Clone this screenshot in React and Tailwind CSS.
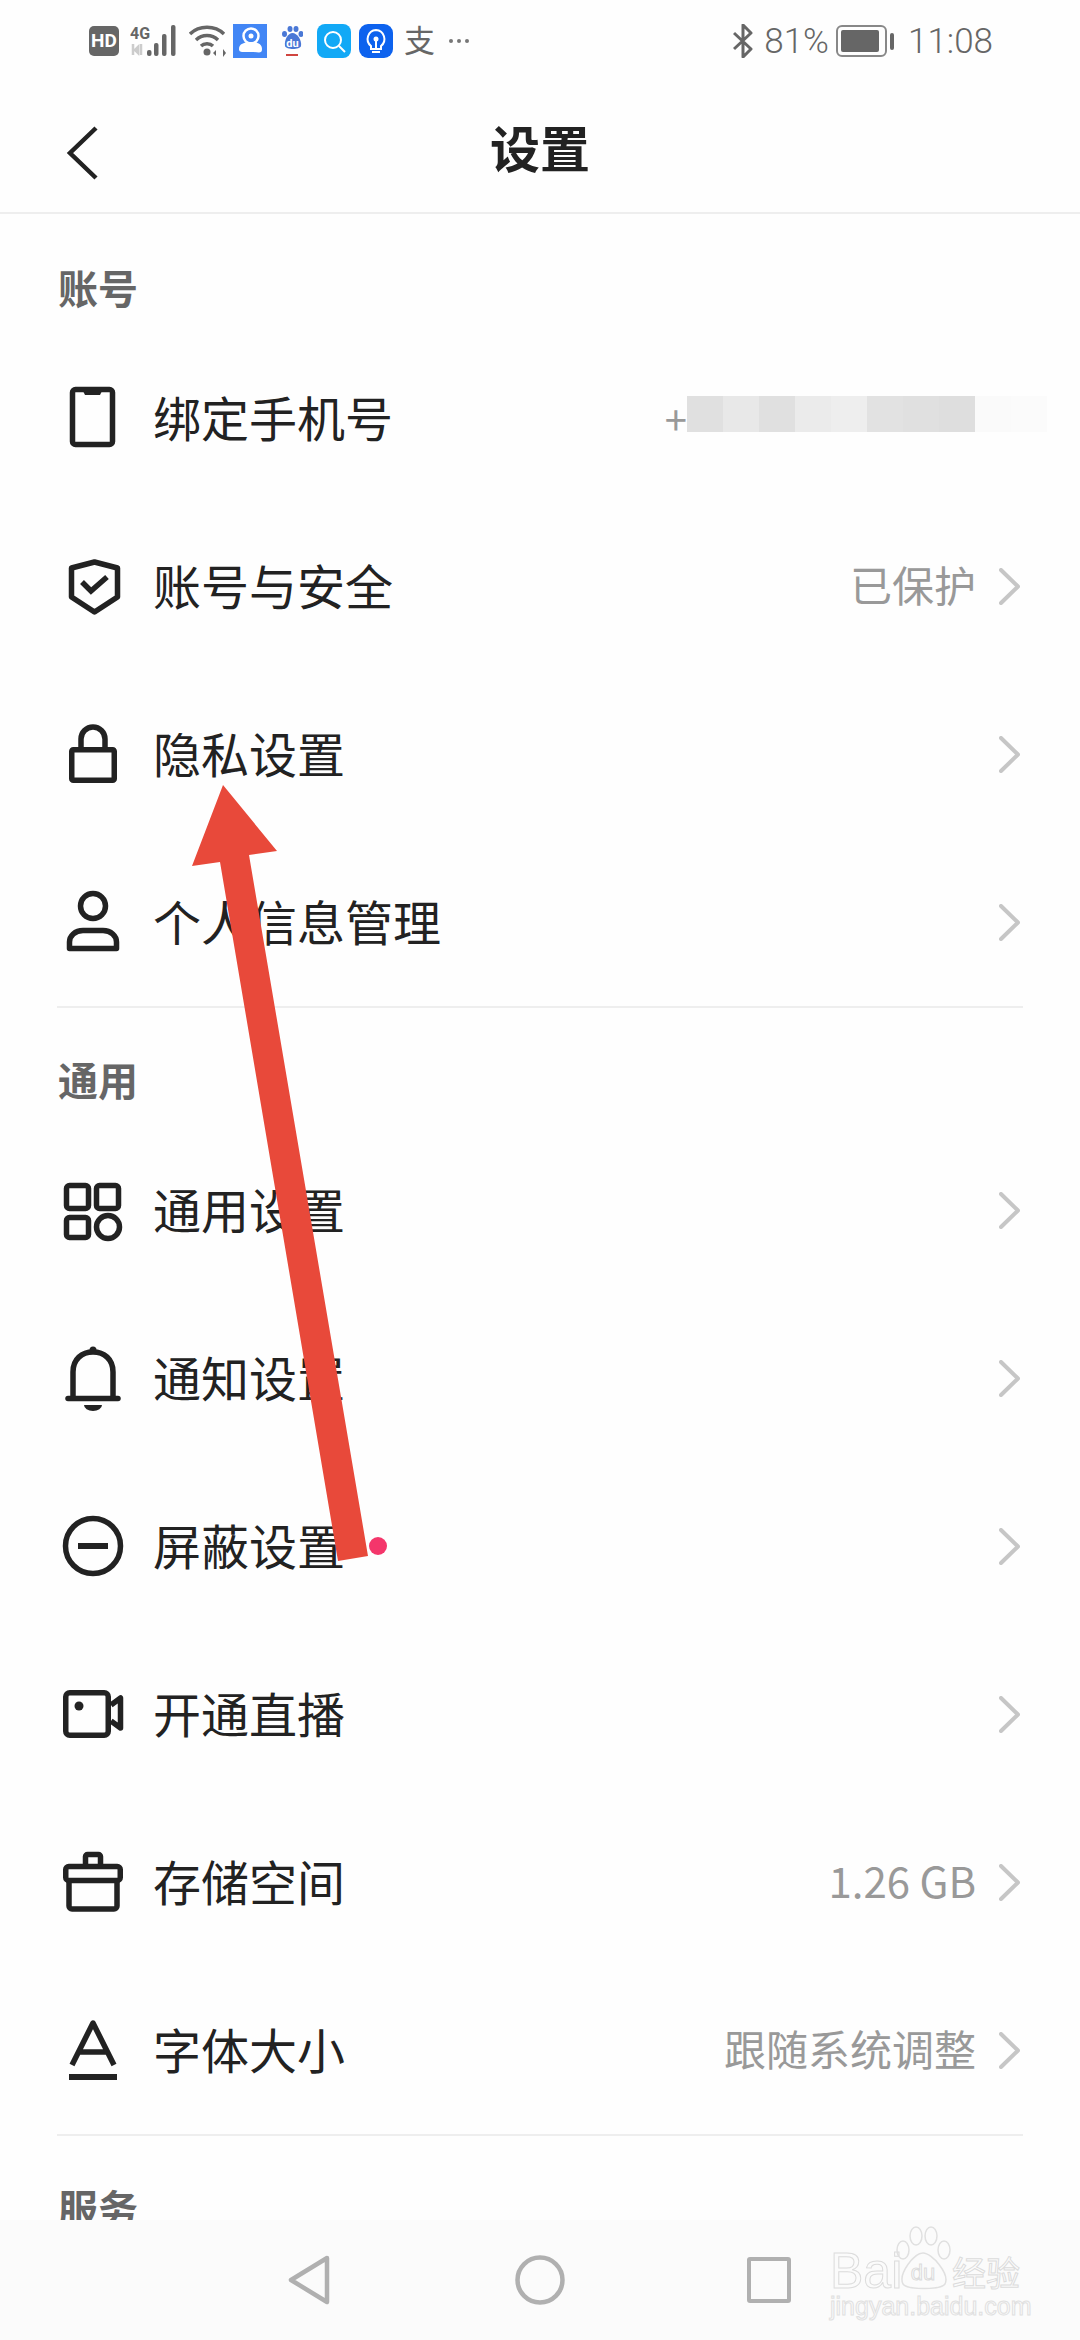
import React from 'react';

const stroke = { fill: 'none', stroke: '#222', strokeWidth: 5.5 };

const Ico = ({ children }) => (
  <svg width="64" height="64" viewBox="0 0 64 64" className="shrink-0 overflow-visible">
    {children}
  </svg>
);

const PhoneIcon = () => (
  <Ico>
    <rect x="11.5" y="3.5" width="40" height="55" rx="3" {...stroke} />
    <path d="M22 5h19l-2 4H24z" fill="#222" />
  </Ico>
);
const ShieldIcon = () => (
  <Ico>
    <path d="M33.5 8L56.5 14V43L33.5 58L10.5 43V14Z" {...stroke} strokeLinejoin="round" />
    <path d="M21 28L30 37L46 23" {...stroke} />
  </Ico>
);
const LockIcon = () => (
  <Ico>
    <rect x="10.75" y="27.75" width="42.5" height="30.5" rx="1.5" {...stroke} />
    <path d="M20 27V17a12 12 0 0 1 24 0V27" {...stroke} />
  </Ico>
);
const PersonIcon = () => (
  <Ico>
    <circle cx="32" cy="16" r="12.5" {...stroke} />
    <path d="M8.500 58.500V52C8.500 46 14 40.500 22 40.500H42C50 40.500 55.500 46 55.500 52V58.500Z" {...stroke} strokeLinejoin="round" />
  </Ico>
);
const GridIcon = () => (
  <Ico>
    <rect x="5.5" y="7.5" width="22" height="23" rx="3" {...stroke} />
    <rect x="35.5" y="7.5" width="22" height="23" rx="3" {...stroke} />
    <rect x="5.5" y="39.5" width="22" height="20" rx="3" {...stroke} />
    <circle cx="47" cy="49" r="11.5" {...stroke} />
  </Ico>
);
const BellIcon = () => (
  <Ico>
    <path d="M12 51V26C12 13 21 6 32 6C43 6 52 13 52 26V51" {...stroke} />
    <path d="M7 52.5H57" {...stroke} strokeLinecap="round" />
    <circle cx="32" cy="4" r="3.5" fill="#222" />
    <path d="M23 59h18a9 6 0 0 1-18 0z" fill="#222" />
  </Ico>
);
const MinusIcon = () => (
  <Ico>
    <circle cx="32" cy="32" r="27.5" {...stroke} />
    <rect x="17" y="29" width="30" height="6" fill="#222" />
  </Ico>
);
const CameraIcon = () => (
  <Ico>
    <rect x="4.75" y="10.75" width="42.5" height="42.5" rx="4" {...stroke} />
    <path d="M50 23L59.5 16V46L50 39" {...stroke} strokeLinejoin="round" />
    <circle cx="18" cy="24" r="4.5" fill="#222" />
  </Ico>
);
const BoxIcon = () => (
  <Ico>
    <path d="M24.5 16V6.5a2 2 0 0 1 2-2h11a2 2 0 0 1 2 2V16" {...stroke} />
    <rect x="4.75" y="16.5" width="54.5" height="14" rx="3" {...stroke} />
    <path d="M8 31V56a3 3 0 0 0 3 3h42a3 3 0 0 0 3-3V31" {...stroke} />
  </Ico>
);
const FontIcon = () => (
  <Ico>
    <path d="M11 47L32 5L53 47M18 34H46" {...stroke} strokeLinejoin="round" />
    <rect x="8" y="56" width="48" height="6" fill="#222" />
  </Ico>
);

const Chevron = () => (
  <svg width="21" height="37" viewBox="0 0 21 37" className="shrink-0">
    <path d="M2 2L19 18.5L2 35" fill="none" stroke="#c6c6c6" strokeWidth="4" strokeLinecap="round" strokeLinejoin="round" />
  </svg>
);

const Row = ({ icon, label, value, dot, children }) => (
  <div className="flex items-center h-[168px] pl-[61px] pr-[60px]">
    {icon}
    <span className="ml-[28px] mb-[5px] text-[48px] leading-none text-[#222]">{label}</span>
    {dot && <span className="ml-[24px] w-[18px] h-[18px] rounded-full bg-[#f4366b]" />}
    <div className="flex-1" />
    {children || (
      <>
        {value && <span className="mr-[23px] mb-[5px] text-[42px] leading-none text-[#999]">{value}</span>}
        <Chevron />
      </>
    )}
  </div>
);

const Heading = ({ children }) => (
  <div className="h-[120px] pt-[48px] pl-[58px] text-[40px] leading-[50px] font-bold text-[#666]">{children}</div>
);

const blurBlocks = ['#e0e0e0', '#e8e8e8', '#e0e0e0', '#ebebeb', '#eeeeee', '#e2e2e2', '#e0e0e0', '#dedede', '#fafafa', '#fbfbfb'];

const StatusLeft = () => (
  <div className="flex items-center">
    <div className="w-[30px] h-[30px] rounded-[5px] bg-[#666] text-white text-[19px] leading-[30px] font-bold text-center font-['Roboto',sans-serif]">HD</div>
    <svg width="50" height="32" viewBox="0 0 50 32" className="ml-[11px]">
      <text x="0" y="14" fontSize="16" fontWeight="700" fill="#666" fontFamily="Roboto">4G</text>
      <path d="M3 19v11M8 22l-3 3 3 3zM11 19v11" stroke="#ccc" strokeWidth="2.5" fill="none" />
      <rect x="17" y="25" width="4.5" height="6" rx="2" fill="#666" />
      <rect x="24" y="18" width="4.5" height="13" rx="2" fill="#666" />
      <rect x="32" y="9" width="4.5" height="22" rx="2" fill="#666" />
      <rect x="41" y="0" width="4.5" height="31" rx="2" fill="#666" />
    </svg>
    <svg width="37" height="32" viewBox="0 0 37 32" className="ml-[9px]">
      <path d="M1 9C10 0 26 0 35 9M7 15C13 9 23 9 29 15M12 21C15 18 21 18 24 21" fill="none" stroke="#666" strokeWidth="3.4" />
      <circle cx="18" cy="27" r="3.5" fill="#666" />
      <path d="M27 25l-3 3 3 3zM31 24v8M34 24l3 4-3 4z" fill="#666" />
    </svg>
    <svg width="34" height="34" viewBox="0 0 34 34" className="ml-[7px]">
      <rect width="34" height="34" fill="#4286f5" />
      <circle cx="18" cy="12" r="7.5" fill="none" stroke="#fff" strokeWidth="2.5" />
      <circle cx="18" cy="12" r="2.5" fill="#fff" />
      <path d="M6 25c0-5 5-7 12-7s11 2 11 7-3 3-11 3-12 1-12-3z" fill="#fff" />
    </svg>
    <svg width="21" height="30" viewBox="0 0 21 30" className="ml-[15px]">
      <ellipse cx="2.5" cy="8" rx="2.5" ry="3" fill="#4a78d6" />
      <ellipse cx="8" cy="3" rx="2.5" ry="3" fill="#4a78d6" />
      <ellipse cx="14" cy="3" rx="2.5" ry="3" fill="#4a78d6" />
      <ellipse cx="19" cy="8" rx="2.5" ry="3" fill="#4a78d6" />
      <path d="M10.500 7C6 7 2 14 3 20c1 4 15 4 16 0 1-6-4-13-8.500-13z" fill="#4a78d6" />
      <text x="10.500" y="21" textAnchor="middle" fontSize="11" fontWeight="700" fill="#fff" fontFamily="Roboto">du</text>
      <rect x="4" y="28" width="12" height="2" fill="#d0453f" />
    </svg>
    <svg width="34" height="34" viewBox="0 0 34 34" className="ml-[14px]">
      <rect width="34" height="34" rx="8" fill="#12a9f6" />
      <circle cx="16" cy="16" r="8" fill="none" stroke="#fff" strokeWidth="2" />
      <path d="M22 22l6 6" stroke="#fff" strokeWidth="2" />
    </svg>
    <svg width="34" height="34" viewBox="0 0 34 34" className="ml-[8px]">
      <rect width="34" height="34" rx="9" fill="#0d62ee" />
      <path d="M17 6a9 9 0 0 0-5 16v3h10v-3a9 9 0 0 0-5-16z" fill="none" stroke="#fff" strokeWidth="2" />
      <circle cx="17" cy="15" r="2.500" fill="#fff" />
      <path d="M17 15v9M13 28h8" stroke="#fff" strokeWidth="2" />
    </svg>
    <span className="ml-[11px] mb-[6px] w-[31px] text-[31px] leading-none text-[#666] text-center">支</span>
    <div className="ml-[14px] flex gap-[4px]">
      <span className="w-[4px] h-[4px] rounded-full bg-[#777]" />
      <span className="w-[4px] h-[4px] rounded-full bg-[#777]" />
      <span className="w-[4px] h-[4px] rounded-full bg-[#777]" />
    </div>
  </div>
);

const StatusRight = () => (
  <div className="flex items-center font-['Roboto',sans-serif] text-[#666] text-[35px] leading-none font-light">
    <svg width="20" height="34" viewBox="0 0 20 34">
      <path d="M1 9L18 25L10 33V1L18 9L1 25" fill="none" stroke="#666" strokeWidth="3" strokeLinejoin="round" />
    </svg>
    <span className="ml-[11px]">81%</span>
    <div className="ml-[7px] w-[51px] h-[32px] rounded-[6px] border-[2px] border-[#888] p-[3px]">
      <div className="w-[38px] h-full rounded-[2px] bg-[#666]" />
    </div>
    <div className="ml-[3px] w-[4px] h-[17px] rounded-[2px] bg-[#666]" />
    <span className="ml-[14px]">11:08</span>
  </div>
);

const Watermark = () => (
  <div className="absolute left-[830px] top-[6px] w-[190px] h-[92px]">
    <span className="absolute left-0 top-[20px] font-['Liberation_Sans',sans-serif] text-[50px] leading-[50px] text-transparent [-webkit-text-stroke:1px_#dcdcdc]">Bai</span>
    <svg width="60" height="66" viewBox="0 0 60 66" className="absolute left-[64px] top-0">
      <g fill="none" stroke="#e0e0e0" strokeWidth="1.500">
        <ellipse cx="9" cy="24" rx="6" ry="9" />
        <ellipse cx="22" cy="10" rx="6" ry="9" />
        <ellipse cx="37" cy="10" rx="6" ry="9" />
        <ellipse cx="50" cy="24" rx="6" ry="9" />
        <path d="M29 27C20 27 4 48 9 58c4 6 38 6 42 0 5-10-13-31-22-31z" />
      </g>
      <text x="29" y="54" textAnchor="middle" fontSize="22" fill="none" stroke="#dcdcdc" strokeWidth="1" fontFamily="Liberation Sans">du</text>
    </svg>
    <span className="absolute left-[122px] top-[26px] text-[34px] leading-[40px] text-transparent [-webkit-text-stroke:1px_#dcdcdc]">经验</span>
    <span className="absolute left-0 top-[66px] font-['Liberation_Sans',sans-serif] text-[25px] leading-[28px] text-transparent [-webkit-text-stroke:1px_#e0e0e0]">jingyan.baidu.com</span>
  </div>
);

export default function App() {
  return (
    <div className="relative flex flex-col w-[1080px] h-[2340px] overflow-hidden bg-[#fefefe] font-['Noto_Sans_CJK_SC','Noto_Sans',sans-serif]">
      <div className="shrink-0 flex items-center justify-between h-[82px] pl-[89px] pr-[87px]">
        <StatusLeft />
        <StatusRight />
      </div>

      <div className="shrink-0 relative flex items-center justify-center h-[132px] pb-[2px] border-b-2 border-[#eeeeee]">
        <svg width="32" height="54" viewBox="0 0 32 54" className="absolute left-[66px] top-[44px]">
          <path d="M30 2L4 27L30 52" fill="none" stroke="#222" strokeWidth="4.500" />
        </svg>
        <span className="text-[50px] leading-none font-bold text-[#222]">设置</span>
      </div>

      <div className="flex-1 min-h-0 overflow-hidden">
        <Heading>账号</Heading>
        <Row icon={<PhoneIcon />} label="绑定手机号">
          <div className="flex items-center mr-[-27px]">
            <span className="text-[40px] leading-none text-[#999]">+</span>
            <div className="flex mt-[-8px]">
              {blurBlocks.map((c, i) => (
                <div key={i} className="w-[36px] h-[36px]" style={{ backgroundColor: c }} />
              ))}
            </div>
          </div>
        </Row>
        <Row icon={<ShieldIcon />} label="账号与安全" value="已保护" />
        <Row icon={<LockIcon />} label="隐私设置" />
        <Row icon={<PersonIcon />} label="个人信息管理" />
        <div className="h-[2px] mx-[57px] bg-[#eeeeee] -mb-[2px]" />

        <Heading>通用</Heading>
        <Row icon={<GridIcon />} label="通用设置" />
        <Row icon={<BellIcon />} label="通知设置" />
        <Row icon={<MinusIcon />} label="屏蔽设置" dot />
        <Row icon={<CameraIcon />} label="开通直播" />
        <Row icon={<BoxIcon />} label="存储空间" value="1.26 GB" />
        <Row icon={<FontIcon />} label="字体大小" value="跟随系统调整" />
        <div className="h-[2px] mx-[57px] bg-[#eeeeee] -mb-[2px]" />

        <Heading>服务</Heading>
      </div>

      <div className="shrink-0 relative flex items-center h-[120px] pl-[288px] bg-[#fbfbfb]">
        <svg width="42" height="50" viewBox="0 0 42 50">
          <path d="M39 3L3 25L39 47Z" fill="none" stroke="#b0b0b0" strokeWidth="4.500" strokeLinejoin="round" />
        </svg>
        <svg width="50" height="50" viewBox="0 0 50 50" className="ml-[185px]">
          <circle cx="25" cy="25" r="22.500" fill="none" stroke="#b0b0b0" strokeWidth="4.500" />
        </svg>
        <div className="ml-[182px] w-[44px] h-[46px] rounded-[3px] border-[4px] border-[#b0b0b0]" />
        <Watermark />
      </div>

      <svg width="1080" height="2340" viewBox="0 0 1080 2340" className="absolute left-0 top-0 pointer-events-none">
        <polygon points="223,785 277,851 249,855 368,1556 338,1561 220,862 192,866" fill="#e8493a" />
      </svg>
    </div>
  );
}
